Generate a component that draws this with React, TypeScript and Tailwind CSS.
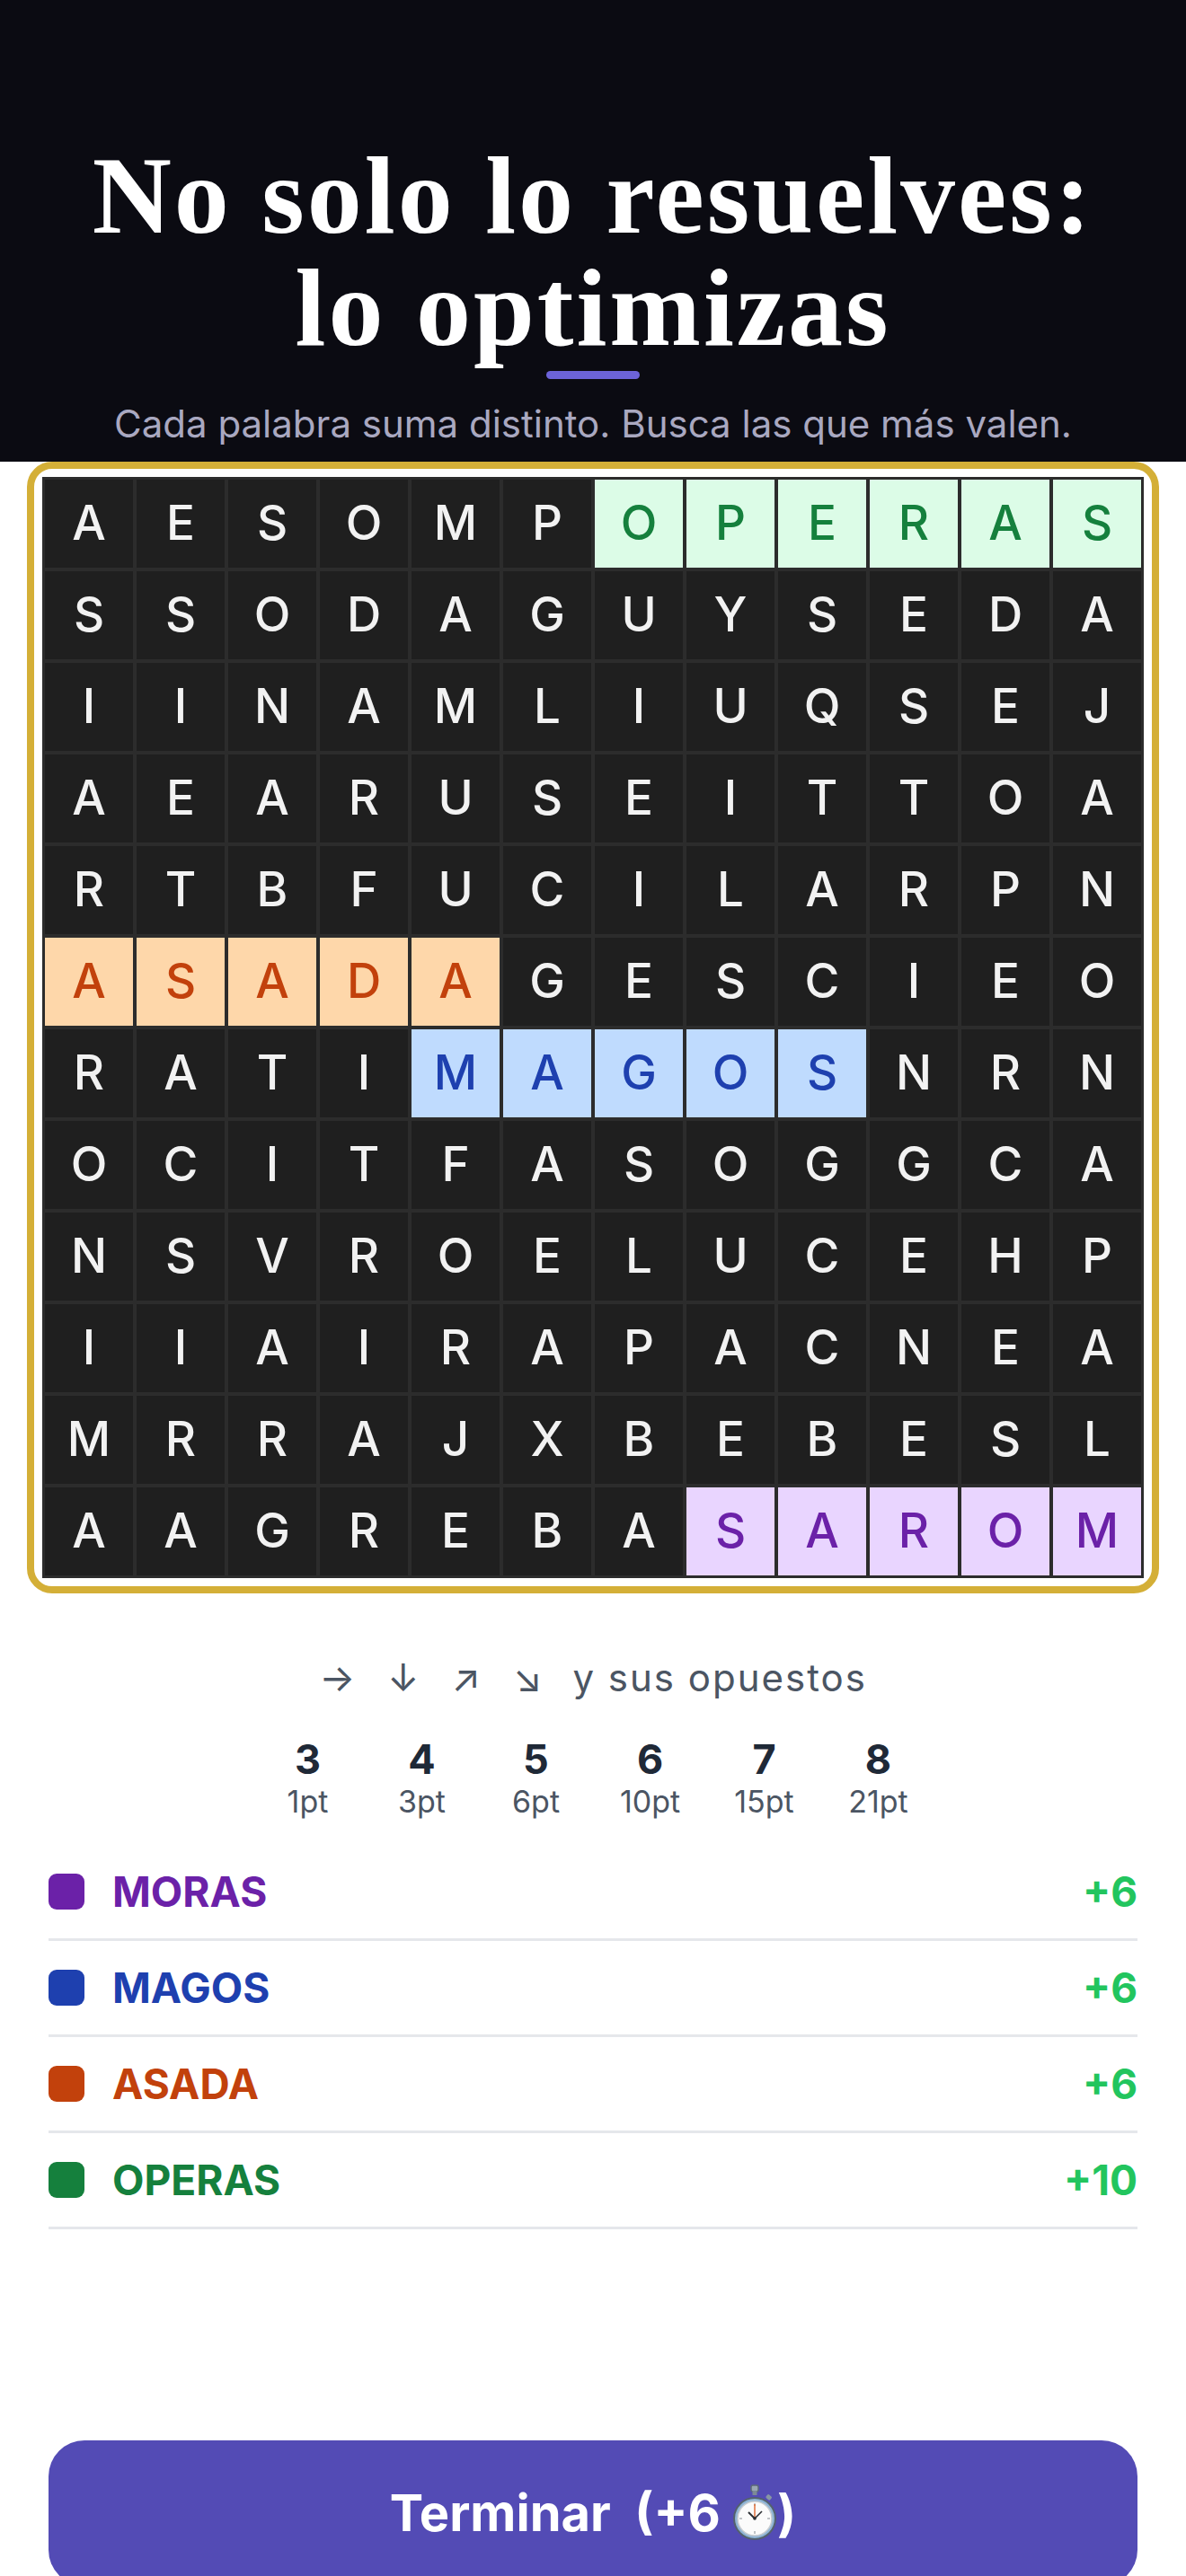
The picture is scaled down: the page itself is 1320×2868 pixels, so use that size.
import React from 'react';

const rows = [
  'AESOMPOPERAS',
  'SSODAGUYSEDA',
  'IINAMLIUQSEJ',
  'AEARUSEITTOA',
  'RTBFUCILARPN',
  'ASADAGESCIEO',
  'RATIMAGOSNRN',
  'OCITFASOGGCA',
  'NSVROELUCEHP',
  'IIAIRAPACNEA',
  'MRRAJXBEBESL',
  'AAGREBASAROM',
];

// found words: row, start col, end col
const found = [
  { r: 0, from: 6, to: 11, cell: 'bg-[#dcfce7] text-[#15803d]' },
  { r: 5, from: 0, to: 4, cell: 'bg-[#fed7aa] text-[#c2410c]' },
  { r: 6, from: 4, to: 8, cell: 'bg-[#bfdbfe] text-[#1e40af]' },
  { r: 11, from: 7, to: 11, cell: 'bg-[#e9d5ff] text-[#6b21a8]' },
];

const cellClass = (r: number, c: number) => {
  const hit = found.find((f) => f.r === r && c >= f.from && c <= f.to);
  return hit ? hit.cell : 'bg-[#1f1f1f] text-[#f2f2f2]';
};

const scores = [
  { len: 3, pt: '1pt' },
  { len: 4, pt: '3pt' },
  { len: 5, pt: '6pt' },
  { len: 6, pt: '10pt' },
  { len: 7, pt: '15pt' },
  { len: 8, pt: '21pt' },
];

const words = [
  { word: 'MORAS', pts: '+6', text: 'text-[#6b21a8]', dot: 'bg-[#6b21a8]' },
  { word: 'MAGOS', pts: '+6', text: 'text-[#1e40af]', dot: 'bg-[#1e40af]' },
  { word: 'ASADA', pts: '+6', text: 'text-[#c2410c]', dot: 'bg-[#c2410c]' },
  { word: 'OPERAS', pts: '+10', text: 'text-[#15803d]', dot: 'bg-[#15803d]' },
];

const Stopwatch = () => (
  <svg width="50" height="64" viewBox="0 0 50 64" className="inline-block">
    <rect x="21" y="1" width="8" height="7" rx="2" fill="#9aa7b4" stroke="#5c6b78" strokeWidth="1.5" />
    <rect x="22.5" y="7" width="5" height="5" fill="#7d8a96" />
    <rect x="38" y="12" width="6" height="5" rx="1.5" fill="#8796a3" transform="rotate(40 41 14)" />
    <circle cx="25" cy="38" r="23" fill="#8fb5d6" stroke="#54616d" strokeWidth="2" />
    <circle cx="25" cy="38" r="19" fill="#fbfbfb" stroke="#c7ccd1" strokeWidth="1.5" />
    <g stroke="#9aa0a6" strokeWidth="1.2">
      <line x1="25" y1="21" x2="25" y2="24" />
      <line x1="25" y1="52" x2="25" y2="55" />
      <line x1="8" y1="38" x2="11" y2="38" />
      <line x1="39" y1="38" x2="42" y2="38" />
    </g>
    <line x1="25" y1="38" x2="25" y2="22" stroke="#e0662e" strokeWidth="1.4" />
    <line x1="25" y1="38" x2="18" y2="31" stroke="#2b2f33" strokeWidth="2" />
    <line x1="25" y1="38" x2="33" y2="30" stroke="#2b2f33" strokeWidth="1.6" />
    <circle cx="25" cy="38" r="1.8" fill="#2b2f33" />
  </svg>
);

export default function App() {
  return (
    <div className="min-h-screen bg-white font-['Inter','Noto_Sans',sans-serif]">
      <header className="bg-[#0b0b12] pt-[155px] pb-[16px] flex flex-col items-center text-center">
        <h1 className="font-['Liberation_Serif',serif] font-bold text-white text-[122px] leading-[125px] tracking-[3px]">
          No solo lo resuelves:
          <br />
          lo optimizas
        </h1>
        <div className="mt-[8px] w-[104px] h-[9px] rounded-full bg-[#6c63d9]" />
        <p className="mt-[24px] text-[42px] leading-[52px] text-[#a9a8c0]">
          Cada palabra suma distinto. Busca las que más valen.
        </p>
      </header>

      <div className="px-[30px]">
        <div className="border-[8px] border-[#d4af37] rounded-[28px] p-[9px]">
          <div className="grid grid-cols-12 gap-[4px] p-[3px] bg-[#2c2c2c]">
            {rows.map((row, r) =>
              row.split('').map((ch, c) => (
                <div
                  key={`${r}-${c}`}
                  className={`h-[98px] flex items-center justify-center text-[53px] font-medium ${cellClass(r, c)}`}
                >
                  {ch}
                </div>
              ))
            )}
          </div>
        </div>
      </div>

      <div className="mt-[62px] flex items-center justify-center gap-[34px] text-[42px] leading-[63px] text-[#4b5563]">
        <span className="flex gap-[36px]">
          <span>→</span>
          <span>↓</span>
          <span>↗</span>
          <span>↘</span>
        </span>
        <span className="tracking-[2px]">y sus opuestos</span>
      </div>

      <div className="mt-[33px] flex justify-center gap-[47px]">
        {scores.map((s) => (
          <div key={s.len} className="w-[80px] flex flex-col items-center">
            <span className="text-[45px] leading-[54px] font-bold text-[#1f2937]">{s.len}</span>
            <span className="text-[34px] leading-[40px] text-[#4b5563]">{s.pt}</span>
          </div>
        ))}
      </div>

      <ul className="mt-[28px] mx-[54px]">
        {words.map((w) => (
          <li
            key={w.word}
            className="h-[107px] flex items-center justify-between border-b-[3px] border-[#e5e7eb]"
          >
            <div className="flex items-center gap-[31px]">
              <span className={`w-[40px] h-[40px] rounded-[9px] ${w.dot}`} />
              <span className={`text-[46px] font-bold ${w.text}`}>{w.word}</span>
            </div>
            <span className="text-[46px] font-bold text-[#22c55e]">{w.pts}</span>
          </li>
        ))}
      </ul>

      <div className="mt-[235px] mx-[54px]">
        <button className="w-full h-[162px] rounded-[40px] bg-[#534bb5] text-white text-[56px] font-bold flex items-center justify-center">
          <span className="whitespace-pre">Terminar  (+6 </span>
          <Stopwatch />
          <span>)</span>
        </button>
      </div>
    </div>
  );
}
